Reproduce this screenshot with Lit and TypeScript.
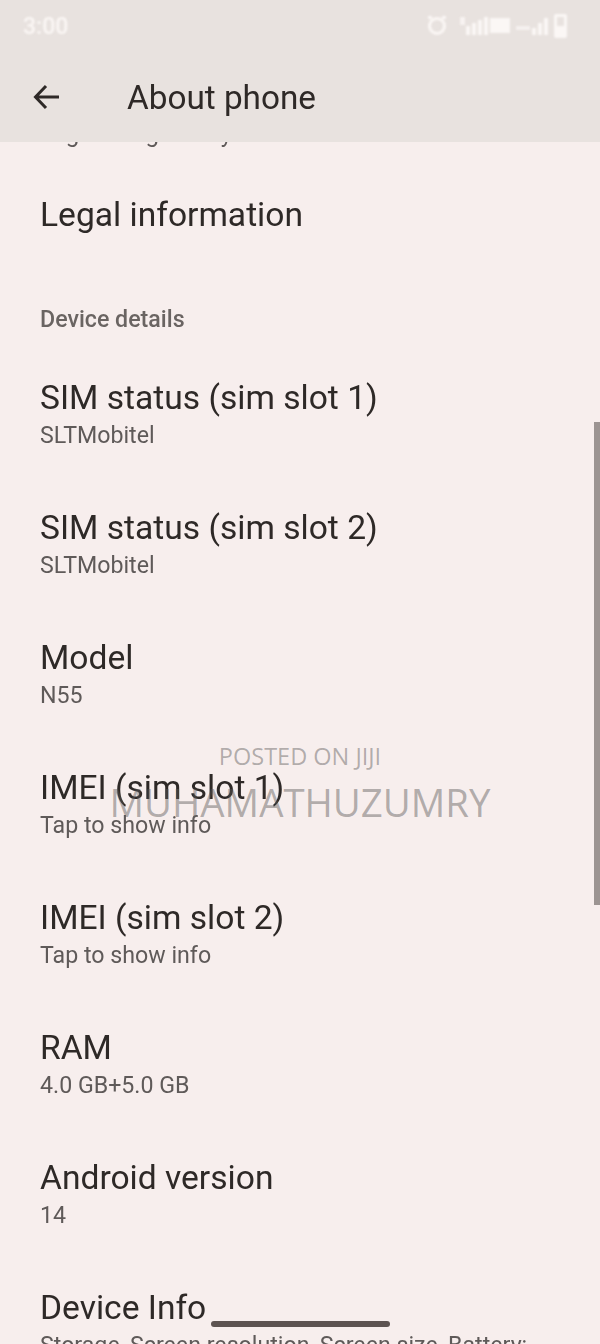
import { LitElement, html, css, svg } from 'lit';
import { customElement } from 'lit/decorators.js';

const rows = [
  { title: 'SIM status (sim slot 1)', sub: 'SLTMobitel' },
  { title: 'SIM status (sim slot 2)', sub: 'SLTMobitel' },
  { title: 'Model', sub: 'N55' },
  { title: 'IMEI (sim slot 1)', sub: 'Tap to show info' },
  { title: 'IMEI (sim slot 2)', sub: 'Tap to show info' },
  { title: 'RAM', sub: '4.0 GB+5.0 GB' },
  { title: 'Android version', sub: '14' },
  { title: 'Device Info', sub: 'Storage, Screen resolution, Screen size, Battery:' },
];

@customElement('app-root')
export class AppRoot extends LitElement {
  static styles = css`
    :host {
      display: flex;
      flex-direction: column;
      position: relative;
      width: 600px;
      height: 1344px;
      overflow: hidden;
      background: #f7eeed;
      font-family: Roboto, "Noto Sans", sans-serif;
      color: #2e2927;
    }
    .top {
      flex: none;
      height: 142px;
      background: #e8e2df;
      display: flex;
      flex-direction: column;
    }
    .status {
      height: 52px;
      display: flex;
      align-items: center;
      justify-content: space-between;
      padding: 0 32px 0 23px;
      color: #fbf7f5;
      filter: blur(1px);
    }
    .time { font-size: 23px; font-weight: 500; }
    .bar {
      flex: 1;
      display: flex;
      align-items: center;
      padding-left: 32px;
      gap: 65px;
      filter: blur(0.6px);
    }
    .bar h1 { margin: 0; font-size: 33.3px; font-weight: 400; }
    .list {
      flex: 1;
      overflow: hidden;
      padding-left: 40px;
      filter: blur(0.6px);
    }
    .clipped {
      margin-top: -22px;
      height: 28px;
      font-size: 24px;
      line-height: 28px;
      white-space: nowrap;
      color: #5f5a59;
    }
    .legal {
      font-size: 33.6px;
      line-height: 40px;
      margin-top: 47px;
    }
    .section {
      font-size: 23.2px;
      font-weight: 500;
      line-height: 28px;
      margin-top: 70px;
      color: #6a6462;
    }
    .rows { display: flex; flex-direction: column; gap: 54px; margin-top: 45px; }
    .row { display: flex; flex-direction: column; height: 76px; }
    .title { font-size: 33.6px; line-height: 40px; white-space: nowrap; }
    .sub {
      font-size: 23.2px;
      line-height: 34px;
      white-space: nowrap;
      color: #5f5a59;
    }
    .title-line { display: flex; align-items: flex-end; gap: 5px; }
    .home {
      width: 179px;
      height: 6px;
      margin-bottom: 1px;
      border-radius: 3px;
      background: #5d5351;
    }
    .scroll {
      position: absolute;
      right: 0;
      top: 422px;
      width: 6px;
      height: 483px;
      background: #9c9492;
    }
    .mark {
      position: absolute;
      left: 0;
      right: 0;
      top: 740px;
      display: flex;
      flex-direction: column;
      align-items: center;
      font-family: "Open Sans", "Noto Sans", sans-serif;
      color: rgba(90, 88, 88, 0.45);
      pointer-events: none;
    }
    .mark .posted { font-size: 23.5px; line-height: 32px; }
    .mark .user { font-size: 38.4px; line-height: 60px; }
  `;

  // status icons are smudged in the source, so only rough shapes
  private statusIcons() {
    return svg`
      <circle cx="17" cy="15" r="7.5" fill="none" stroke="currentColor" stroke-width="3" />
      <rect x="8" y="5" width="4" height="3" fill="currentColor" />
      <rect x="22" y="5" width="4" height="3" fill="currentColor" />
      <rect x="40" y="6" width="5" height="8" fill="currentColor" opacity="0.8" />
      <rect x="46" y="15" width="4" height="9" fill="currentColor" />
      <rect x="52" y="12" width="4" height="12" fill="currentColor" />
      <rect x="58" y="9" width="4" height="15" fill="currentColor" />
      <rect x="64" y="6" width="4" height="18" fill="currentColor" />
      <rect x="70" y="7" width="20" height="15" fill="currentColor" />
      <rect x="96" y="15" width="14" height="4" fill="currentColor" opacity="0.7" />
      <rect x="112" y="17" width="4" height="7" fill="currentColor" />
      <rect x="118" y="12" width="4" height="12" fill="currentColor" />
      <rect x="124" y="7" width="4" height="17" fill="currentColor" />
      <rect x="134" y="3" width="13" height="24" rx="2" fill="currentColor" />
      <rect x="137" y="6" width="7" height="9" fill="#e8e2df" />
    `;
  }

  render() {
    return html`
      <div class="top">
        <div class="status">
          <span class="time">3:00</span>
          <svg width="148" height="30" viewBox="0 0 148 30">${this.statusIcons()}</svg>
        </div>
        <div class="bar">
          <svg width="30" height="30" viewBox="0 0 30 30">
            <path d="M27 15H4M14 4L3.5 15 14 26" fill="none" stroke="#2e2927" stroke-width="3" />
          </svg>
          <h1>About phone</h1>
        </div>
      </div>
      <div class="list">
        <div class="clipped">Legal &amp; regulatory</div>
        <div class="legal">Legal information</div>
        <div class="section">Device details</div>
        <div class="rows">
          ${rows.map(
            (r) => html`
              <div class="row">
                <div class="title-line">
                  <span class="title">${r.title}</span>
                  ${r.title === 'Device Info' ? html`<span class="home"></span>` : ''}
                </div>
                <div class="sub">${r.sub}</div>
              </div>
            `
          )}
        </div>
      </div>
      <div class="scroll"></div>
      <div class="mark">
        <span class="posted">POSTED ON JIJI</span>
        <span class="user">MUHAMATHUZUMRY</span>
      </div>
    `;
  }
}
